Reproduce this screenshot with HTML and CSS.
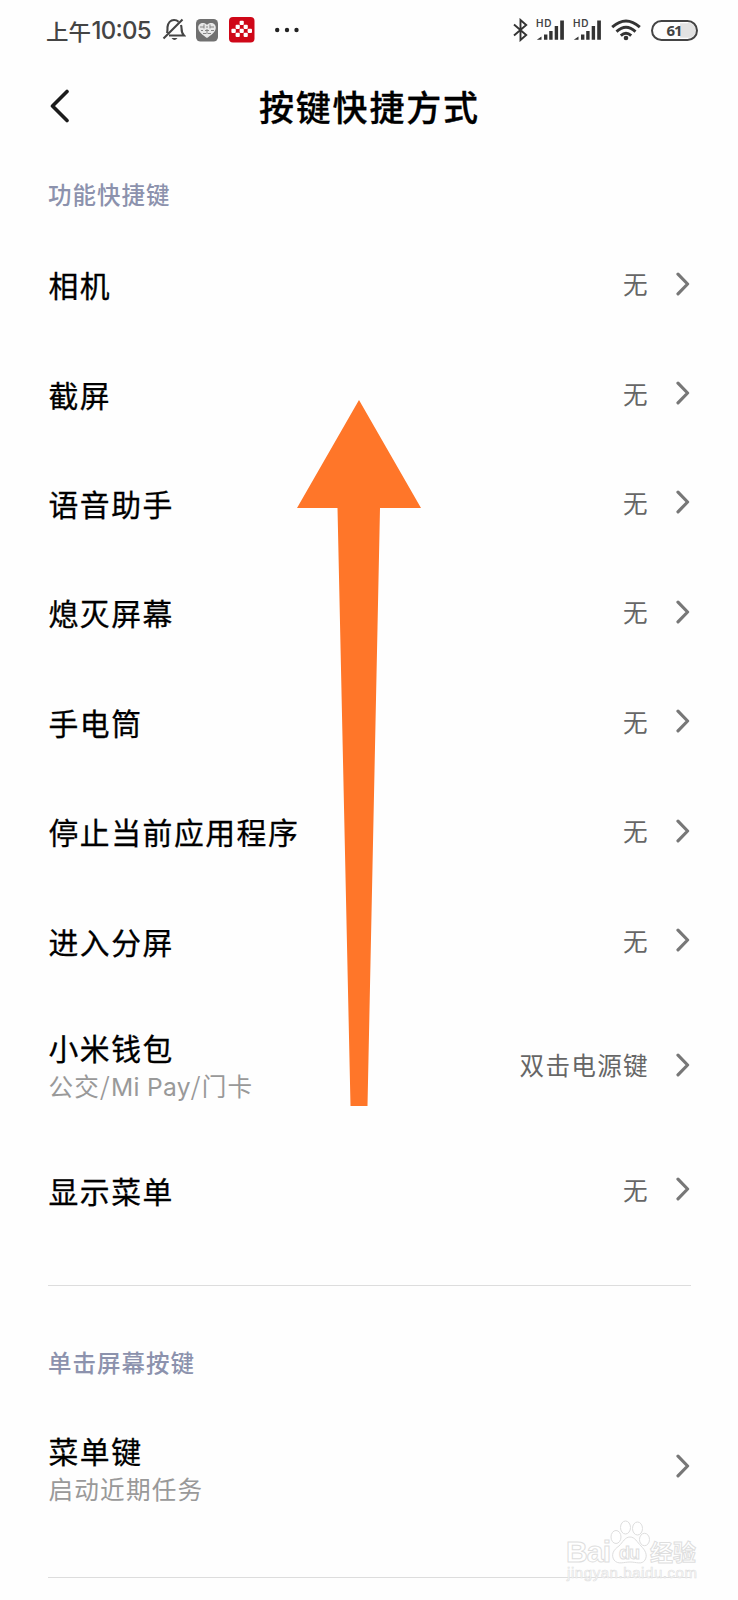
FILE: index.html
```
<!DOCTYPE html>
<html lang="zh-CN">
<head>
<meta charset="utf-8">
<title>按键快捷方式</title>
<link rel="stylesheet" href="styles.css">
</head>
<body>
<svg class="defs" width="0" height="0" aria-hidden="true">
  <symbol id="chev" viewBox="0 0 14 24"><path d="M2 2.2 L11.6 12 L2 21.8" fill="none" stroke="#777" stroke-width="3.2" stroke-linecap="round" stroke-linejoin="round"/></symbol>
  <symbol id="bars" viewBox="0 0 29 23">
    <path d="M0.8 20.8 L5.5 17.6 V20.8Z M8 15.5h3.4v5.3H8z M13.2 12h3.4v8.8h-3.4z M18.7 7h3.4v13.8h-3.4z M24.2 1.5h3.7v19.3h-3.7z" fill="#333"/>
  </symbol>
</svg>
<div class="screen">
  <div class="status">
    <div class="left">
      <svg width="107" height="34"><text x="0" y="26.5" class="time" textLength="45" lengthAdjust="spacingAndGlyphs">上午</text><text x="45.500" y="26" class="clock" textLength="60">10:05</text></svg>
      <svg class="bell" width="24" height="24" viewBox="0 0 24 24" fill="none" stroke="#444" stroke-width="2.1">
        <path d="M7 17.5 H22 C20 15.5 19.5 14 19.5 10 C19.5 9 19.3 8 19 7 M5 15 C5.7 12.8 5.4 10.8 5.5 9 C6 5 8.6 2 12 2 C14 2 15.5 2.7 16.5 3.7 M1.5 20.5 L20.5 1.5"/>
        <path d="M9.500 20 H15.500 Q12.500 24 9.500 20Z" fill="#444" stroke="none"/>
      </svg>
      <svg class="heart" width="22" height="23" viewBox="0 0 22 23">
        <rect width="22" height="22.500" rx="4.500" fill="#707070"/>
        <path d="M11 6 C8 2.5 2 4 2.2 9 C2.5 13.5 7 16 11 19 C15 16 19.5 13.5 19.8 9 C20 4 14 2.5 11 6Z" fill="#e8e8e8"/>
        <path d="M4 8h4M10 8h2M14 8h4M5 11.5h2M9 11.5h4M15 11.5h3M7 14.5h3M12 14.5h3M8 5.5v4M14 5.5v4M11 10v5" stroke="#858585" stroke-width="1"/>
      </svg>
      <svg class="red" width="26" height="26" viewBox="0 0 26 26">
        <rect width="25.500" height="25.500" rx="4" fill="#cf0718"/>
        <g fill="#fff"><rect x="10.6" y="3.8" width="4.2" height="4.2" rx="1"/><rect x="6.6" y="7.8" width="4.2" height="4.2" rx="1"/><rect x="14.6" y="7.8" width="4.2" height="4.2" rx="1"/><rect x="2.4" y="11.8" width="4.4" height="4.2" rx="1"/><rect x="10.6" y="11.8" width="4.2" height="4.2" rx="1"/><rect x="18.6" y="11.8" width="4.4" height="4.2" rx="1"/><rect x="6.6" y="15.8" width="4.2" height="4.2" rx="1"/><rect x="14.6" y="15.8" width="4.2" height="4.2" rx="1"/></g>
      </svg>
      <svg class="dots" width="24" height="6"><circle cx="2.200" cy="3" r="2.200"/><circle cx="12" cy="3" r="2.200"/><circle cx="21.500" cy="3" r="2.200"/></svg>
    </div>
    <div class="right">
      <svg width="15" height="24" viewBox="0 0 15 24" fill="none" stroke="#333" stroke-width="1.9"><path d="M1 6.5 L13.2 17 L7.5 22 V2 L13.2 7 L1 17.5"/></svg>
      <svg class="signal" width="29" height="23"><use href="#bars"/><text x="0" y="7.600" class="hd" textLength="15.500">HD</text></svg>
      <svg class="signal" width="29" height="23"><use href="#bars"/><text x="0" y="7.600" class="hd" textLength="15.500">HD</text></svg>
      <svg class="wifi" width="30" height="22" viewBox="0 0 30 22" fill="none" stroke="#333" stroke-width="2.9"><path d="M1.2 8.2 Q15 -4.2 28.8 8.2 M5.5 12.6 Q15 4 24.5 12.6 M9.8 16.7 Q15 12 20.2 16.7"/><circle cx="15" cy="19" r="2.300" fill="#333" stroke="none"/></svg>
      <svg class="battery" width="47" height="21" viewBox="0 0 47 21"><path d="M29 3.2 H36 A7.3 7.3 0 0 1 39 17.8 H29Z" fill="#e2e2e2"/><rect x="1" y="1" width="45" height="19" rx="9.500" fill="none" stroke="#444" stroke-width="2"/><text x="15.500" y="16" class="pct">61</text></svg>
    </div>
  </div>
  <header class="bar">
    <svg width="20" height="34" viewBox="0 0 20 34"><path d="M18 2.5 L3.5 17 L18 31.5" fill="none" stroke="#1c1c1c" stroke-width="3.6" stroke-linecap="round" stroke-linejoin="round"/></svg>
    <h1>按键快捷方式</h1>
  </header>
  <h2 class="group">功能快捷键</h2>
  <ul class="list">
    <li><span class="name">相机</span><span class="value">无</span><svg class="chev"><use href="#chev"/></svg></li>
    <li><span class="name">截屏</span><span class="value">无</span><svg class="chev"><use href="#chev"/></svg></li>
    <li><span class="name">语音助手</span><span class="value">无</span><svg class="chev"><use href="#chev"/></svg></li>
    <li><span class="name">熄灭屏幕</span><span class="value">无</span><svg class="chev"><use href="#chev"/></svg></li>
    <li><span class="name">手电筒</span><span class="value">无</span><svg class="chev"><use href="#chev"/></svg></li>
    <li><span class="name">停止当前应用程序</span><span class="value">无</span><svg class="chev"><use href="#chev"/></svg></li>
    <li><span class="name">进入分屏</span><span class="value">无</span><svg class="chev"><use href="#chev"/></svg></li>
    <li class="tall"><div class="stack"><span class="name">小米钱包</span><span class="sub">公交/<span class="latin">Mi Pay</span>/门卡</span></div><span class="value">双击电源键</span><svg class="chev"><use href="#chev"/></svg></li>
    <li><span class="name">显示菜单</span><span class="value">无</span><svg class="chev"><use href="#chev"/></svg></li>
  </ul>
  <hr>
  <h2 class="group second">单击屏幕按键</h2>
  <ul class="list">
    <li class="tall"><div class="stack"><span class="name">菜单键</span><span class="sub">启动近期任务</span></div><svg class="chev"><use href="#chev"/></svg></li>
  </ul>
  <hr>
  <svg class="arrow" width="126" height="708" viewBox="0 0 126 708"><path d="M62 0 L124 108 H83 L70.500 706 H53.500 L40.500 108 H0Z" fill="#ff7629"/></svg>
  <svg class="mark" width="140" height="70" viewBox="0 0 140 70">
    <g fill="#fff" stroke="#dedede" stroke-width="1">
      <text x="1" y="42" class="bai" textLength="45">Bai</text>
      <ellipse cx="51" cy="17" rx="5" ry="6.500"/><ellipse cx="60.500" cy="7.500" rx="5" ry="6.500"/><ellipse cx="72.500" cy="8.500" rx="5" ry="6.500"/><ellipse cx="79.500" cy="19.500" rx="5" ry="6.200"/>
      <path d="M65 17 C60 17 58 22 54 26 C48 30 46 35 49 40 C53 45 59 42 65 42 C71 42 77 45 80 40 C83 35 80 30 76 26 C72 22 70 17 65 17Z"/>
      <text x="54" y="39" class="du" textLength="21">du</text>
      <text x="85" y="41" class="jy" textLength="46">经验</text>
      <text x="2" y="58" class="url" textLength="130">jingyan.baidu.com</text>
    </g>
  </svg>
</div>
</body>
</html>
```
FILE: styles.css
```
* { box-sizing: border-box; }
body { margin: 0; background: #fefefe; font-family: "Noto Sans CJK SC", sans-serif; }
.defs { position: absolute; }
.screen { position: relative; width: 738px; height: 1600px; overflow: hidden; background: #fefefe; }
svg { display: block; flex: none; }
.status { height: 60px; padding: 0 40px 0 46px; display: flex; justify-content: space-between; align-items: center; }
.left, .right { display: flex; align-items: center; }
.time { font-size: 22px; font-weight: 500; fill: #444; }
.clock { font: 500 24px Inter, sans-serif; fill: #444; }
.bell { margin-left: 9px; }
.heart { margin-left: 10px; }
.red { margin-left: 11px; }
.dots { margin-left: 20px; fill: #222; }
.hd { font: 600 10px Inter, sans-serif; fill: #444; }
.signal { margin-left: 8px; overflow: visible; }
.wifi { margin-left: 9px; }
.battery { margin-left: 10px; }
.pct { font: 700 15px "Noto Sans", sans-serif; letter-spacing: -1.2px; fill: #444; }
.bar { height: 92px; padding-left: 49px; display: flex; align-items: center; }
.bar h1 { margin: 0 0 0 190px; font-size: 35px; line-height: 50px; font-weight: 500; letter-spacing: 1.8px; color: #000; -webkit-text-stroke: .3px #000; }
.group { margin: 0; padding: 24px 48px 0; height: 78px; font-size: 23.5px; line-height: 36px; font-weight: 500; letter-spacing: 1px; color: #8c92ad; }
.list { list-style: none; margin: 0; padding: 0 47px 0 48.5px; }
.list li { height: 109.4px; display: flex; align-items: center; }
.list li.tall { height: 140px; }
.name { flex: 1; margin-top: -1px; font-size: 29.8px; line-height: 38px; letter-spacing: 1.55px; color: #000; -webkit-text-stroke: .3px #000; }
.stack { flex: 1; display: flex; flex-direction: column; padding-top: 4px; }
.stack .name { flex: none; }
.sub { font-size: 24.6px; line-height: 38px; letter-spacing: 1.2px; color: #999; }
.latin { font-family: Inter, sans-serif; letter-spacing: .3px; }
.value { margin-top: -3px; font-size: 24.6px; line-height: 36px; letter-spacing: 1.3px; color: #666; }
.chev { width: 14px; height: 24px; margin-left: 27px; margin-right: 1px; margin-top: -2px; }
hr { width: 643px; height: 1px; margin: 40px 0 0 48px; border: 0; background: #ddd; }
.second { padding-top: 58px; height: 111px; }
.arrow { position: absolute; left: 297px; top: 400px; }
.mark { position: absolute; left: 565px; top: 1520px; }
.bai { font: 700 30px "Liberation Sans", sans-serif; }
.du { font: 700 18px "Liberation Sans", sans-serif; }
.jy { font-size: 23px; font-weight: 700; }
.url { font: 400 15px "Liberation Sans", sans-serif; stroke-width: .6px; }
```
